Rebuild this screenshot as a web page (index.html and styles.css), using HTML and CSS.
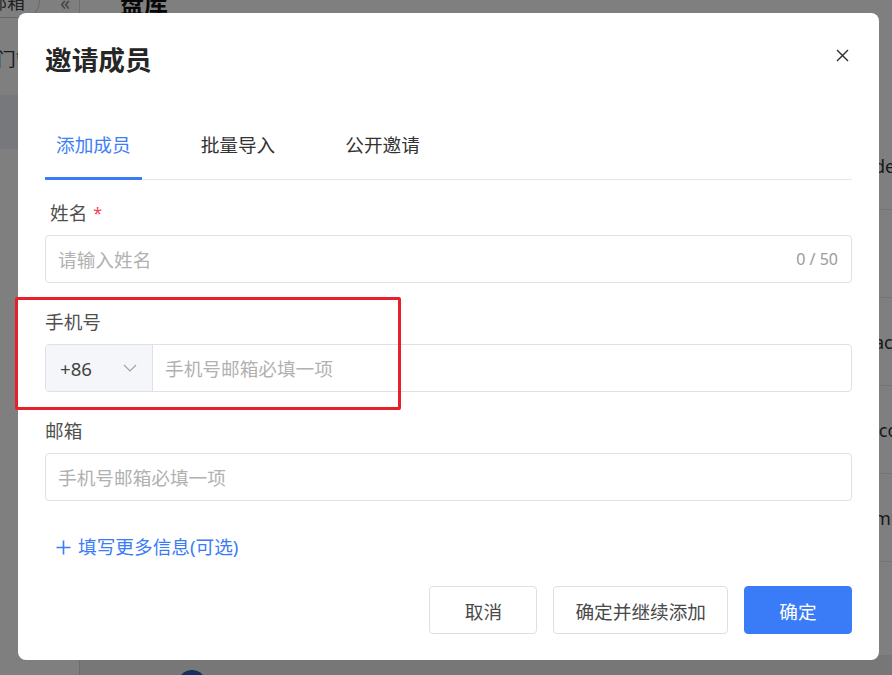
FILE: index.html
```html
<!DOCTYPE html>
<html lang="zh-CN">
<head>
    <meta charset="UTF-8">
    <meta name="viewport" content="width=device-width, initial-scale=1.0">
    <title>邀请成员</title>
    <link rel="stylesheet" href="styles.css">
</head>
<body>
    <!-- Страница под модалкой -->
    <div class="page">
        <aside class="sidebar">
            <div class="sidebar-top">
                <span class="pill">邮箱</span>
                <span class="fold">«</span>
            </div>
            <div class="menu-item"><span class="menu-text">门管理</span></div>
            <div class="menu-item selected"></div>
        </aside>
        <main class="main">
            <h2 class="main-title">盘库</h2>
            <div class="rows">
                <div class="row"><span></span><span class="cell">dev</span></div>
                <div class="row"><span></span><span class="cell"></span></div>
                <div class="row"><span></span><span class="cell">acc</span></div>
                <div class="row"><span></span><span class="cell">.com</span></div>
                <div class="row"><span></span><span class="cell">mm</span></div>
            </div>
            <div class="footer"><span class="avatar"></span></div>
        </main>
    </div>

    <div class="mask"></div>

    <div class="dialog">
        <h1 class="dialog-title">邀请成员</h1>
        <button class="close-btn" aria-label="关闭">
            <svg width="13" height="13" viewBox="0 0 13 13">
                <path d="M1 1 L12 12 M12 1 L1 12" stroke="#2b2b2b" stroke-width="1.4" fill="none"/>
            </svg>
        </button>

        <div class="tabs">
            <div class="tab active">添加成员</div>
            <div class="tab">批量导入</div>
            <div class="tab">公开邀请</div>
        </div>

        <div class="form">
            <div class="field">
                <div class="label label-required">姓名<span class="star">*</span></div>
                <div class="input-box">
                    <input class="input" type="text" placeholder="请输入姓名">
                    <span class="counter">0 / 50</span>
                </div>
            </div>

            <div class="field">
                <div class="label">手机号</div>
                <div class="input-box phone-box">
                    <div class="code">
                        <span>+86</span>
                        <svg width="14" height="8" viewBox="0 0 14 8">
                            <path d="M1 1 L7 7 L13 1" stroke="#a3a3a3" stroke-width="1.2" fill="none"/>
                        </svg>
                    </div>
                    <input class="input" type="text" placeholder="手机号邮箱必填一项">
                </div>
            </div>

            <div class="field">
                <div class="label">邮箱</div>
                <div class="input-box">
                    <input class="input" type="text" placeholder="手机号邮箱必填一项">
                </div>
            </div>

            <a class="more-link" href="#">
                <svg width="15" height="15" viewBox="0 0 15 15">
                    <path d="M7.5 0.5 V14.5 M0.5 7.5 H14.5" stroke="#3b7cf6" stroke-width="1.6" fill="none"/>
                </svg>
                填写更多信息(可选)
            </a>
        </div>

        <div class="dialog-footer">
            <button class="btn">取消</button>
            <button class="btn">确定并继续添加</button>
            <button class="btn btn-primary">确定</button>
        </div>
    </div>

    <!-- Красная рамка-пометка поверх формы -->
    <div class="mark"></div>
</body>
</html>
```

FILE: styles.css
```css
* {
    margin: 0;
    padding: 0;
    box-sizing: border-box;
    font-family: "Noto Sans", "Noto Sans CJK SC", sans-serif;
}

body {
    width: 892px;
    height: 675px;
    overflow: hidden;
    background: #fff;
    color: #333;
}

/* Фоновая страница */
.page {
    display: flex;
    height: 675px;
}

.sidebar {
    width: 80px;
    flex-shrink: 0;
    border-right: 1px solid #d8d8d8;
    overflow: hidden;
}

.sidebar-top {
    display: flex;
    align-items: center;
    height: 24px;
    margin-top: -10px;
}

.pill {
    display: inline-block;
    margin-left: -26px;
    padding: 0 14px;
    border: 1px solid #d0d0d0;
    border-radius: 20px;
    font-size: 18px;
    line-height: 30px;
    color: #444;
}

.fold {
    margin-left: 20px;
    font-size: 20px;
    color: #888;
}

.menu-item {
    height: 54px;
    margin-top: 18px;
    font-size: 18.67px;
    line-height: 54px;
    color: #333;
    white-space: nowrap;
}

.menu-text {
    margin-left: -3px;
}

.menu-item.selected {
    margin-top: 9px;
    background: #eef1f8;
}

.main {
    flex: 1;
    display: flex;
    flex-direction: column;
    min-width: 0;
}

.main-title {
    height: 136px;
    margin-top: -14px;
    padding-left: 40px;
    font-size: 24px;
    line-height: 36px;
    color: #111;
}

.rows {
    display: flex;
    flex-direction: column;
}

.row {
    display: grid;
    grid-template-columns: 794px 1fr;
    align-items: center;
    height: 88px;
    border-bottom: 1px solid #e6e6e6;
    font-size: 18px;
    color: #333;
}

.footer {
    margin-top: auto;
    height: 20px;
    background: #eeeeee;
    position: relative;
}

.avatar {
    position: absolute;
    left: 98px;
    top: 15px;
    width: 28px;
    height: 28px;
    border-radius: 50%;
    background: #2f5fbf;
}

.mask {
    position: fixed;
    inset: 0;
    background: rgba(0, 0, 0, 0.5);
}

/* Диалог */
.dialog {
    position: fixed;
    left: 18px;
    top: 13px;
    width: 861px;
    height: 647px;
    padding: 29px 27px 26px;
    background: #fff;
    border-radius: 8px;
}

.dialog-title {
    font-size: 26.67px;
    font-weight: 700;
    line-height: 36px;
    color: #262626;
}

.close-btn {
    position: absolute;
    top: 36px;
    right: 30px;
    width: 13px;
    height: 13px;
    border: none;
    background: none;
    cursor: pointer;
    display: flex;
}

.tabs {
    display: flex;
    gap: 48px;
    height: 70px;
    margin-top: 32px;
    border-bottom: 1px solid #e4e6ec;
}

.tab {
    position: relative;
    padding: 0 11px;
    font-size: 18.67px;
    line-height: 69px;
    color: #333;
    cursor: pointer;
}

.tab.active {
    color: #3e7ef6;
}

.tab.active::after {
    content: '';
    position: absolute;
    left: 0;
    right: 0;
    bottom: -1px;
    height: 3px;
    background: #3a7cf7;
}

.form {
    display: flex;
    flex-direction: column;
}

.field {
    margin-top: 26px;
}

.field:first-child {
    margin-top: 20px;
}

.label {
    margin-bottom: 9px;
    font-size: 18.67px;
    line-height: 26px;
    color: #505050;
}

.label-required {
    padding-left: 5px;
}

.star {
    margin-left: 6px;
    font-size: 16px;
    color: #f0424b;
    vertical-align: top;
}

.input-box {
    display: flex;
    align-items: center;
    height: 48px;
    border: 1px solid #dfe1e8;
    border-radius: 4px;
    background: #fff;
}

.input {
    flex: 1;
    min-width: 0;
    height: 100%;
    padding: 0 12px;
    border: none;
    outline: none;
    background: transparent;
    font-size: 18.67px;
    color: #333;
}

.input::placeholder {
    color: #b1b1b1;
}

.counter {
    padding-right: 13px;
    font-size: 16px;
    color: #9a9a9a;
}

.phone-box {
    overflow: hidden;
}

.code {
    display: flex;
    align-items: center;
    justify-content: space-between;
    width: 107px;
    height: 100%;
    padding: 0 15px 0 14px;
    background: #f5f6fa;
    border-right: 1px solid #dfe1e8;
    font-size: 18.67px;
    color: #444;
}

.more-link {
    display: flex;
    align-items: center;
    gap: 7px;
    margin-top: 33px;
    padding-left: 11px;
    font-size: 18.67px;
    line-height: 26px;
    color: #3b7cf6;
    text-decoration: none;
}

.dialog-footer {
    display: flex;
    justify-content: flex-end;
    gap: 16px;
    margin-top: 26px;
}

.btn {
    min-width: 108px;
    height: 48px;
    padding: 0 21px;
    border: 1px solid #dcdfe6;
    border-radius: 4px;
    background: #fff;
    font-size: 18.67px;
    color: #4a4a4a;
    cursor: pointer;
}

.btn-primary {
    background: #3a7cf8;
    border-color: #3a7cf8;
    color: #fff;
}

/* Пометка */
.mark {
    position: fixed;
    left: 15px;
    top: 297px;
    width: 386px;
    height: 113px;
    border: 3px solid #e8202a;
    border-radius: 2px;
}
```
